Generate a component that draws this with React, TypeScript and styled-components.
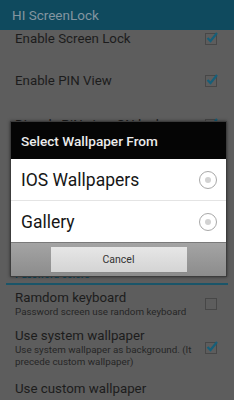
import styled, { createGlobalStyle } from 'styled-components';

const GlobalStyle = createGlobalStyle`
  html, body {
    margin: 0;
    padding: 0;
    background: #5d5d5d;
    font-family: Roboto, "Noto Sans", sans-serif;
  }
  #root {
    width: 234px;
    height: 400px;
    overflow: hidden;
    position: relative;
  }
`;

const Screen = styled.div`
  width: 234px;
  height: 400px;
  position: relative;
  overflow: hidden;
  background: #5d5d5d;
`;

const ActionBar = styled.div`
  position: relative;
  z-index: 1;
  height: 30px;
  background: #0f4a5e;
  display: flex;
  align-items: center;
  padding-left: 12px;
  font-size: 13.5px;
  color: #8395a0;
`;

const List = styled.div`
  margin-top: -12px;
  display: flex;
  flex-direction: column;
`;

const Row = styled.div<{ $pad?: number; $h?: number }>`
  min-height: ${(p) => (p.$pad === undefined ? p.$h ?? 42 : 0)}px;
  padding: ${(p) => p.$pad ?? 0}px 17px ${(p) => p.$pad ?? 0}px 15px;
  box-sizing: border-box;
  display: flex;
  align-items: center;
  justify-content: space-between;
  gap: 10px;
`;

// rows hidden behind the dialog
const Covered = styled.div`
  height: 121px;
`;

const Texts = styled.div`
  display: flex;
  flex-direction: column;
`;

const Title = styled.div`
  font-size: 13.3px;
  line-height: 16px;
  color: #1c1c1c;
`;

const Summary = styled.div`
  font-size: 9.8px;
  line-height: 12px;
  color: #262626;
`;

const Category = styled.div`
  margin: 0 6px;
  height: 16px;
  padding-left: 9px;
  box-sizing: border-box;
  font-size: 10px;
  font-weight: 700;
  line-height: 12px;
  color: #0f4a5e;
  border-bottom: 2px solid #1a5569;
`;

const Box = styled.div`
  flex: none;
  width: 10px;
  height: 10px;
  border: 1px solid #474747;
  position: relative;
`;

const Tick = styled.svg`
  position: absolute;
  left: -1px;
  top: -4px;
`;

const Check = ({ on }: { on: boolean }) => (
  <Box>
    {on && (
      <Tick width="14" height="14" viewBox="0 0 14 14">
        <path d="M2.5 8 L5.5 11 L12 3" fill="none" stroke="#165f79" strokeWidth="2.2" />
      </Tick>
    )}
  </Box>
);

const Dialog = styled.div`
  position: absolute;
  left: 10px;
  top: 121px;
  width: 215px;
  border: 1px solid #3c3c3c;
  box-shadow: 0 0 3px rgba(0, 0, 0, 0.5);
  display: flex;
  flex-direction: column;
  z-index: 2;
`;

const DialogTitle = styled.div`
  height: 37px;
  background: #050505;
  color: #ececec;
  font-size: 13.6px;
  font-weight: 500;
  display: flex;
  align-items: center;
  padding-left: 10px;
`;

const Options = styled.div`
  background: #ffffff;
  display: flex;
  flex-direction: column;
`;

const Option = styled.div<{ $last?: boolean }>`
  height: 41px;
  display: flex;
  align-items: center;
  justify-content: space-between;
  padding: 0 9px 0 10px;
  font-size: 17.5px;
  color: #161616;
  border-bottom: ${(p) => (p.$last ? 'none' : '1px solid #e4e4e4')};
`;

const Radio = styled.div`
  width: 16px;
  height: 16px;
  border-radius: 50%;
  border: 1px solid #a8a8a8;
  display: flex;
  align-items: center;
  justify-content: center;
  &::after {
    content: '';
    width: 6px;
    height: 6px;
    border-radius: 50%;
    background: #d2d2d2;
  }
`;

const ButtonBar = styled.div`
  height: 33px;
  background: linear-gradient(#a4a4a4, #8c8c8c);
  border-top: 1px solid #7a7a7a;
  display: flex;
  align-items: center;
  justify-content: center;
`;

const CancelButton = styled.button`
  width: 136px;
  height: 26px;
  border: none;
  border-bottom: 1px solid #8a8a8a;
  background: linear-gradient(#e6e6e6, #d4d4d4);
  font-family: Roboto, "Noto Sans", sans-serif;
  font-size: 10.5px;
  color: #333333;
  padding: 0;
`;

const App = () => {
  return (
    <>
      <GlobalStyle />
      <Screen>
        <ActionBar>HI ScreenLock</ActionBar>
        <List>
          <Row>
            <Title>Enable Screen Lock</Title>
            <Check on />
          </Row>
          <Row>
            <Title>Enable PIN View</Title>
            <Check on />
          </Row>
          <Row $h={46}>
            <Title>Dispaly PIN view ON lock</Title>
            <Check on />
          </Row>
          <Covered />
          <Category>Password colors</Category>
          <Row $pad={5}>
            <Texts>
              <Title>Ramdom keyboard</Title>
              <Summary>Password screen use random keyboard</Summary>
            </Texts>
            <Check on={false} />
          </Row>
          <Row $pad={5}>
            <Texts>
              <Title>Use system wallpaper</Title>
              <Summary>Use system wallpaper as background. (It precede custom wallpaper)</Summary>
            </Texts>
            <Check on />
          </Row>
          <Row $pad={8}>
            <Title>Use custom wallpaper</Title>
          </Row>
        </List>
        <Dialog>
          <DialogTitle>Select Wallpaper From</DialogTitle>
          <Options>
            <Option>
              IOS Wallpapers
              <Radio />
            </Option>
            <Option $last>
              Gallery
              <Radio />
            </Option>
          </Options>
          <ButtonBar>
            <CancelButton>Cancel</CancelButton>
          </ButtonBar>
        </Dialog>
      </Screen>
    </>
  );
};

export default App;
